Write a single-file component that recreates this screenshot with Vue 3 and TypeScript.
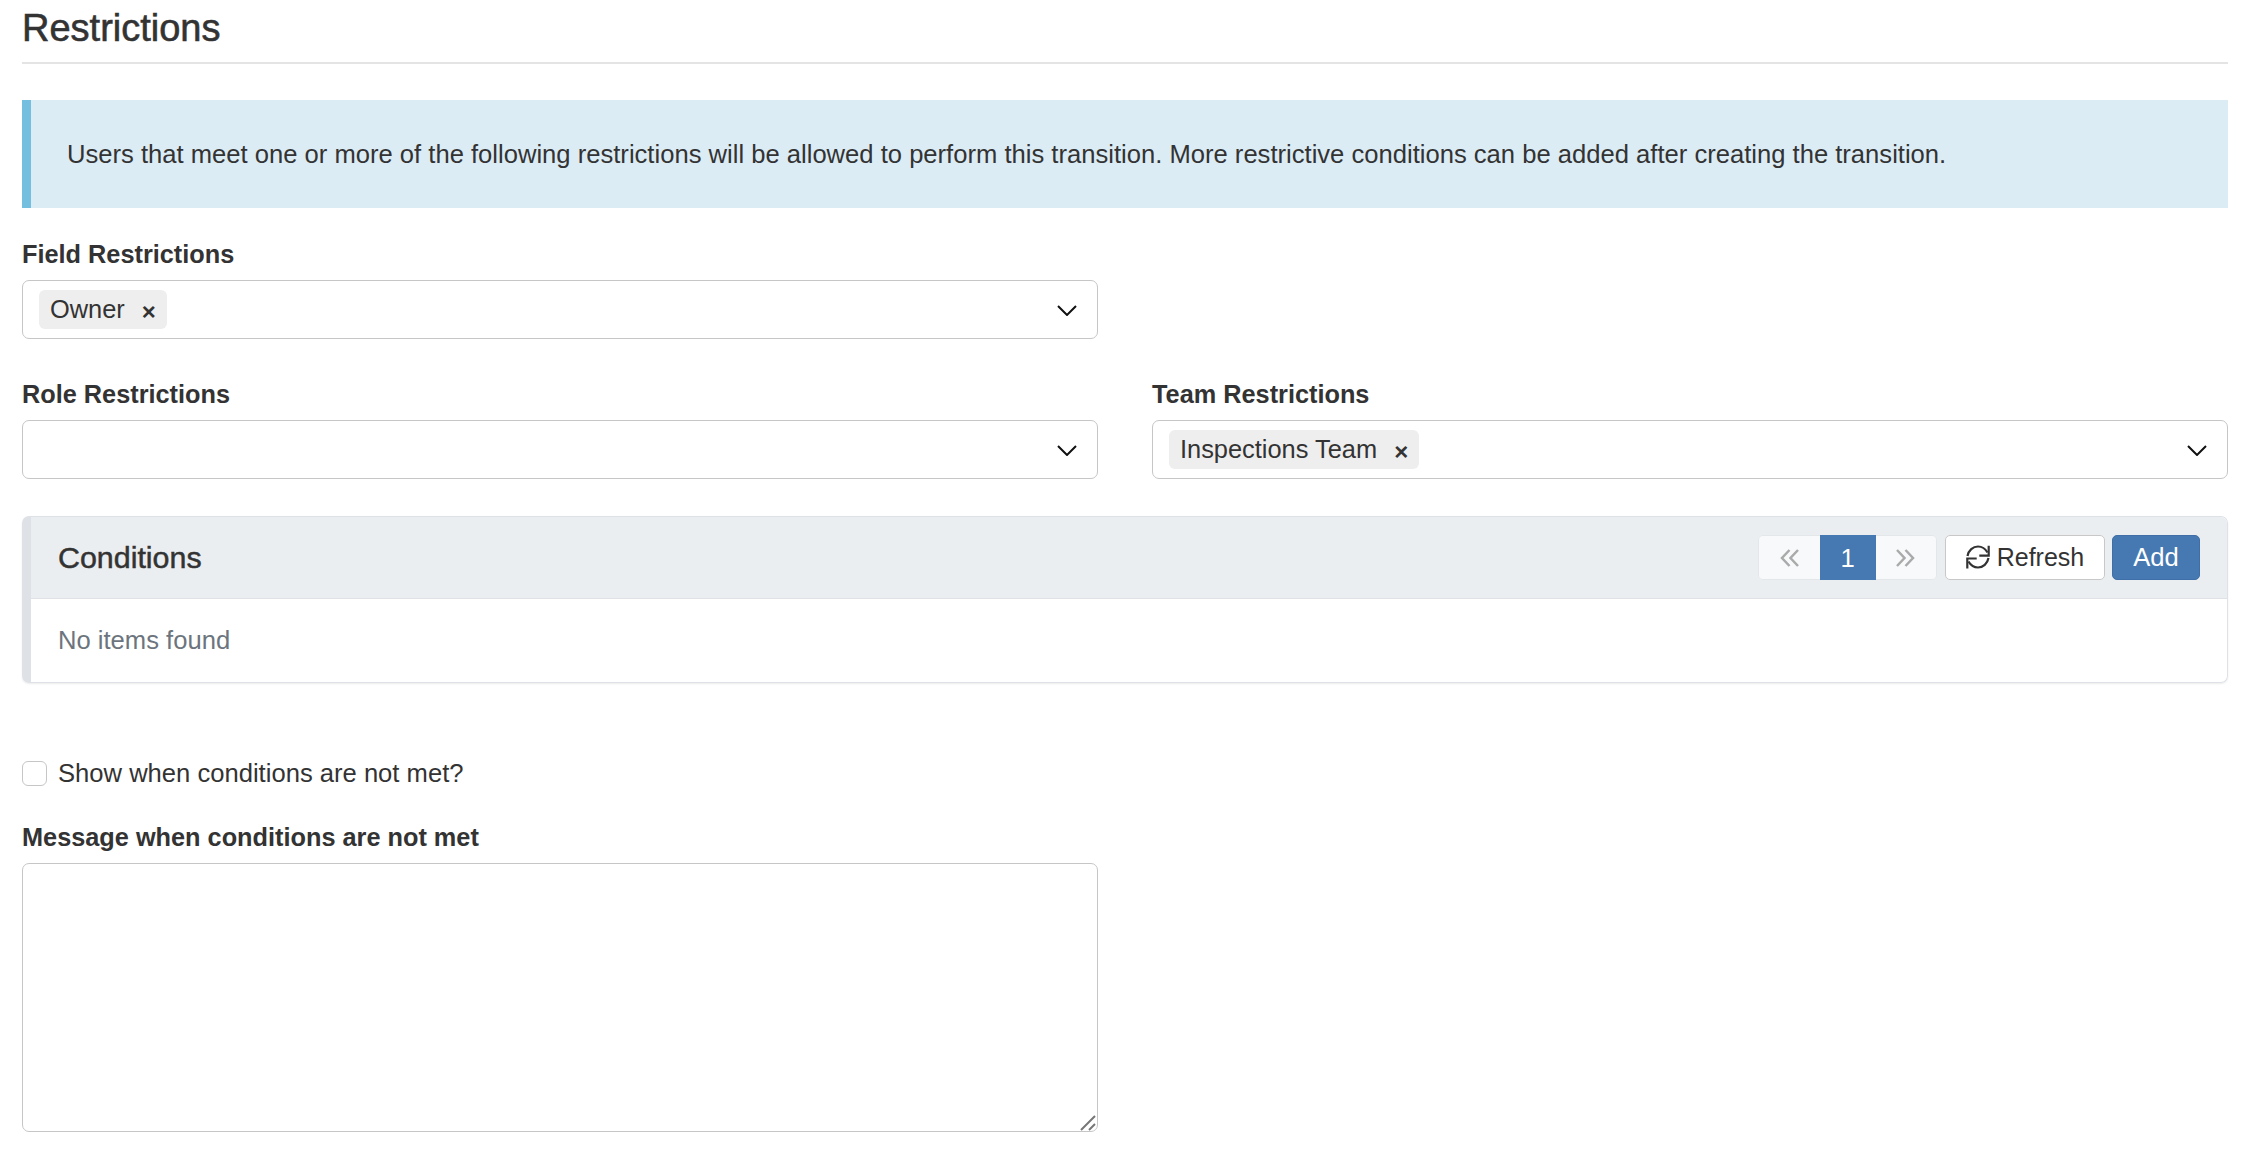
<script setup lang="ts">
const alertText =
  'Users that meet one or more of the following restrictions will be allowed to perform this transition. More restrictive conditions can be added after creating the transition.'
</script>

<template>
  <div class="page">
    <h2 class="title">Restrictions</h2>

    <div class="alert">{{ alertText }}</div>

    <div class="row">
      <div class="field">
        <label class="label">Field Restrictions</label>
        <div class="select">
          <span class="chip"><span class="chip-text">Owner</span><span class="chip-x">×</span></span>
          <svg class="chevron" viewBox="0 0 20 11" width="20" height="11">
            <path d="M1 1l9 9 9-9" />
          </svg>
        </div>
      </div>
      <div class="field"></div>
    </div>

    <div class="row">
      <div class="field">
        <label class="label">Role Restrictions</label>
        <div class="select">
          <svg class="chevron" viewBox="0 0 20 11" width="20" height="11">
            <path d="M1 1l9 9 9-9" />
          </svg>
        </div>
      </div>
      <div class="field">
        <label class="label">Team Restrictions</label>
        <div class="select">
          <span class="chip"><span class="chip-text">Inspections Team</span><span class="chip-x">×</span></span>
          <svg class="chevron" viewBox="0 0 20 11" width="20" height="11">
            <path d="M1 1l9 9 9-9" />
          </svg>
        </div>
      </div>
    </div>

    <section class="panel">
      <header class="panel-head">
        <span class="panel-title">Conditions</span>
        <div class="tools">
          <div class="pager">
            <span class="page-btn">
              <svg viewBox="0 0 20 18" width="20" height="18">
                <path d="M10.500 1L3 9l7.500 8M19 1l-7.500 8 7.500 8" />
              </svg>
            </span>
            <span class="page-btn current">1</span>
            <span class="page-btn">
              <svg viewBox="0 0 20 18" width="20" height="18">
                <path d="M1 1l7.500 8L1 17M9.500 1L17 9l-7.500 8" />
              </svg>
            </span>
          </div>
          <button class="btn refresh" type="button">
            <svg class="sync" viewBox="0 0 24 24" width="24" height="24">
              <path d="M1.500 11C2.500 5.500 7 1.500 12 1.500c3.500 0 7 1.700 9.500 6" />
              <path d="M22.700 0.700v10h-9.400" />
              <path d="M22.500 13C21.500 18.500 17 22.500 12 22.500c-3.500 0-7-1.700-9.500-6" />
              <path d="M1.300 23.500v-10h9.400" />
            </svg>
            <span>Refresh</span>
          </button>
          <button class="btn add" type="button">Add</button>
        </div>
      </header>
      <div class="panel-body">No items found</div>
    </section>

    <label class="check">
      <span class="box"></span>
      <span>Show when conditions are not met?</span>
    </label>

    <div class="row">
      <div class="field">
        <label class="label">Message when conditions are not met</label>
        <div class="message-wrap">
          <textarea class="message"></textarea>
          <svg class="grip" viewBox="0 0 16 16" width="16" height="16">
            <path d="M1 15L15 1M9 15l6-6" />
          </svg>
        </div>
      </div>
      <div class="field"></div>
    </div>
  </div>
</template>

<style>
html,
body {
  background: #fff;
}
</style>

<style scoped>
.page {
  box-sizing: border-box;
  width: 2266px;
  height: 1152px;
  padding: 0 38px 0 22px;
  overflow: hidden;
  font-family: 'Liberation Sans', Arial, sans-serif;
  font-size: 25.600px;
  line-height: 36px;
  color: #333;
}

.title {
  box-sizing: border-box;
  height: 64px;
  margin: 0 0 36px;
  padding-top: 8px;
  border-bottom: 2px solid #e4e4e4;
  font-size: 38px;
  font-weight: 400;
  line-height: 40px;
  -webkit-text-stroke: 0.6px #333;
}

.alert {
  padding: 36px 36px;
  margin-bottom: 28px;
  border-left: 9px solid #74bfdf;
  background: #dcecf5;
}

.row {
  display: grid;
  grid-template-columns: 1076px 1076px;
  column-gap: 54px;
  margin-bottom: 37px;
}

.label {
  display: block;
  margin-bottom: 8px;
  font-size: 25.300px;
  font-weight: 700;
}

.select {
  box-sizing: border-box;
  display: flex;
  align-items: center;
  height: 59px;
  padding: 0 20px 0 16px;
  border: 1px solid #c6c6c6;
  border-radius: 7px;
  background: #fff;
}

.chip {
  display: flex;
  align-items: center;
  height: 39px;
  padding: 0 11px;
  border-radius: 6px;
  background: #eee;
}

.chip-text {
  font-size: 25.400px;
  transform: translateY(-1px);
}

.chip-x {
  margin-left: 17px;
  font-size: 24px;
  font-weight: 700;
  line-height: 1;
  transform: translateY(2px);
}

.chevron {
  margin-left: auto;
  fill: none;
  stroke: #111;
  stroke-width: 2;
  transform: translateY(1px);
}

.panel {
  box-sizing: border-box;
  height: 167px;
  margin-bottom: 72px;
  border: 1px solid #dee2e6;
  border-left: 9px solid #dee2e6;
  border-radius: 7px;
  box-shadow: 0 1px 2px rgba(0, 0, 0, 0.08);
  overflow: hidden;
}

.panel-head {
  box-sizing: border-box;
  display: flex;
  align-items: center;
  justify-content: space-between;
  height: 82px;
  padding: 0 27px;
  border-bottom: 1px solid #dee2e6;
  background: #ebeef1;
}

.panel-title {
  font-size: 30.400px;
  -webkit-text-stroke: 0.5px #333;
  transform: translateY(-1px);
}

.tools {
  display: flex;
  align-items: center;
}

.pager {
  display: flex;
  height: 45px;
  margin-right: 8px;
  border-radius: 5px;
  background: #f8f9fa;
  box-shadow: inset 0 0 0 1px #e4e7ea;
}

.page-btn {
  display: flex;
  align-items: center;
  justify-content: center;
  width: 61.500px;
}

.page-btn svg {
  fill: none;
  stroke: #aaa;
  stroke-width: 2.500;
}

.page-btn.current {
  width: 56px;
  background: #4679b2;
  color: #fff;
}

.btn {
  box-sizing: border-box;
  height: 45px;
  padding: 0;
  border-radius: 5px;
  font: inherit;
  line-height: 1;
}

.refresh {
  display: flex;
  align-items: center;
  justify-content: center;
  gap: 7px;
  width: 160px;
  margin-right: 7px;
  padding-bottom: 1px;
  border: 1px solid #c8c8c8;
  background: #fff;
  color: #333;
  font-size: 25px;
}

.sync {
  fill: none;
  stroke: #333;
  stroke-width: 2.200;
}

.add {
  width: 88px;
  border: 1px solid #3f6fa6;
  background: #4679b2;
  color: #fff;
}

.panel-body {
  padding: 23px 27px 0;
  color: #6c757d;
}

.check {
  display: flex;
  align-items: center;
  gap: 11px;
  margin-bottom: 28px;
}

.box {
  box-sizing: border-box;
  width: 25px;
  height: 25px;
  border: 1px solid #c6c6c6;
  border-radius: 6px;
  background: #fff;
}

.message-wrap {
  position: relative;
  height: 269px;
}

.message {
  box-sizing: border-box;
  display: block;
  width: 100%;
  height: 100%;
  border: 1px solid #c6c6c6;
  border-radius: 7px;
  background: #fff;
  outline: none;
  resize: none;
}

.grip {
  position: absolute;
  right: 2px;
  bottom: 1px;
  fill: none;
  stroke: #777;
  stroke-width: 2;
}
</style>
